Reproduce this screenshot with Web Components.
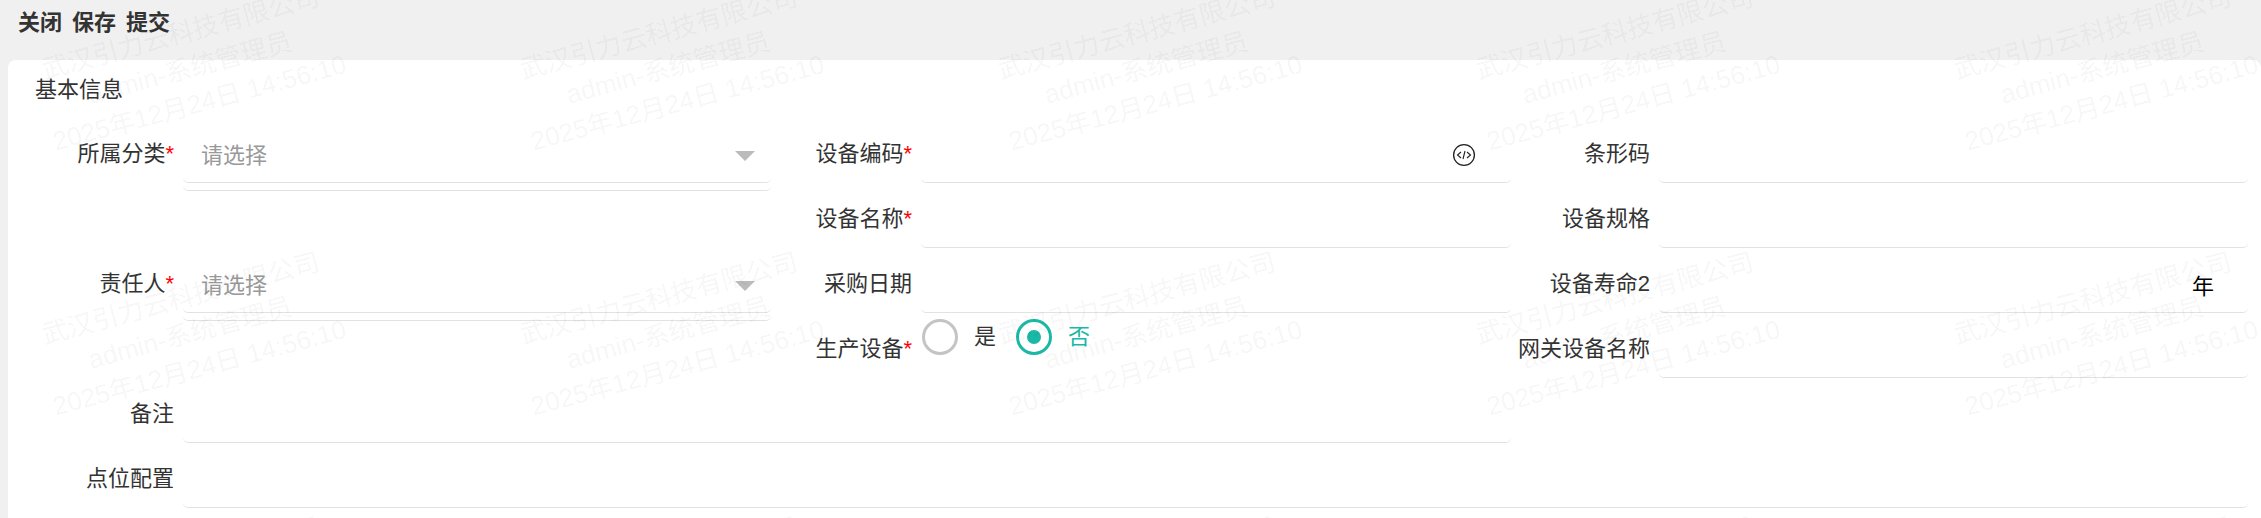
<!DOCTYPE html>
<html lang="zh-CN">
<head>
<meta charset="utf-8">
<title>设备</title>
<style>
	html, body {
		margin: 0;
		height: 518px;
		overflow: hidden;
		background: #f0f0f0;
		color: #333;
		font: 22px/30px "Liberation Sans", "Noto Sans CJK SC", sans-serif;
	}
</style>
</head>
<body>
<app-toolbar>
	<span>关闭</span>
	<span>保存</span>
	<span>提交</span>
</app-toolbar>

<form-card heading="基本信息">
	<form-field label="所属分类" required style="grid-area: 1 / 1"><select-box></select-box></form-field>
	<form-field label="设备编码" required style="grid-area: 1 / 2"><code-icon slot="end"></code-icon></form-field>
	<form-field label="条形码" narrow style="grid-area: 1 / 3"></form-field>

	<form-field label="设备名称" required style="grid-area: 2 / 2"></form-field>
	<form-field label="设备规格" narrow style="grid-area: 2 / 3"></form-field>

	<form-field label="责任人" required style="grid-area: 3 / 1"><select-box></select-box></form-field>
	<form-field label="采购日期" style="grid-area: 3 / 2"></form-field>
	<form-field label="设备寿命2" narrow style="grid-area: 3 / 3"><unit-text slot="end">年</unit-text></form-field>

	<form-field label="生产设备" required plain style="grid-area: 4 / 2">
		<radio-option>是</radio-option>
		<radio-option checked>否</radio-option>
	</form-field>
	<form-field label="网关设备名称" narrow style="grid-area: 4 / 3"></form-field>

	<form-field label="备注" style="grid-area: 5 / 1 / 6 / 3"></form-field>
	<form-field label="点位配置" style="grid-area: 6 / 1 / 7 / 4"></form-field>
</form-card>

<water-mark></water-mark>

<script>
	/**
	 * Top strip with the page actions.
	 */
	class AppToolbar extends HTMLElement {
		constructor () {
			super();
			this.attachShadow({mode: "open"}).innerHTML = `
				<style>
					:host {
						display: flex;
						gap: 10px;
						box-sizing: border-box;
						height: 60px;
						padding: 8px 0 0 18px;
						font-weight: bold;
					}
				</style>
				<slot></slot>
			`;
		}
	}

	/**
	 * The white card that holds the form grid.
	 */
	class FormCard extends HTMLElement {
		constructor () {
			super();
			this.attachShadow({mode: "open"}).innerHTML = `
				<style>
					:host {
						display: block;
						box-sizing: border-box;
						height: 458px;
						margin-left: 8px;
						padding: 15px 0 0 25px;
						background: #fff;
						border-radius: 8px 8px 0 0;
					}
					h2 {
						margin: 0 0 13px 2px;
						font: inherit;
					}
					.grid {
						display: grid;
						grid-template-columns: 738px 740px 737px;
						grid-auto-rows: 65px;
					}
				</style>
				<h2></h2>
				<div class="grid"><slot></slot></div>
			`;
			this.shadowRoot.querySelector("h2").textContent = this.getAttribute("heading");
		}
	}

	/**
	 * A label on the left and an underlined control on the right.
	 */
	class FormField extends HTMLElement {
		constructor () {
			super();
			this.attachShadow({mode: "open"}).innerHTML = `
				<style>
					:host {
						display: flex;
						height: 65px;
						--label-width: 150px;
					}
					:host([narrow]) {
						--label-width: 148px;
					}
					.label {
						flex: none;
						box-sizing: border-box;
						width: var(--label-width);
						padding: 21px 9px 0 0;
						text-align: right;
						white-space: nowrap;
					}
					.label b {
						color: #f00;
						font-weight: normal;
					}
					.control {
						flex: 1;
						display: flex;
						align-items: center;
						min-width: 0;
						box-sizing: border-box;
						border-bottom: 1px solid #e2e2e2;
						border-radius: 0 0 5px 5px;
					}
					:host([plain]) .control {
						border: 0;
						padding-top: 6px;
						align-items: flex-start;
					}
					.end {
						margin-left: auto;
						display: flex;
					}
				</style>
				<div class="label"></div>
				<div class="control">
					<slot></slot>
					<div class="end"><slot name="end"></slot></div>
				</div>
			`;
			const label = this.shadowRoot.querySelector(".label");
			label.textContent = this.getAttribute("label");
			if (this.hasAttribute("required")) {
				const star = document.createElement("b");
				star.textContent = "*";
				label.appendChild(star);
			}
		}
	}

	/**
	 * Placeholder select with its grey caret. It hangs 8px below the grid row.
	 */
	class SelectBox extends HTMLElement {
		constructor () {
			super();
			this.attachShadow({mode: "open"}).innerHTML = `
				<style>
					:host {
						flex: 1;
						align-self: flex-start;
						display: flex;
						align-items: center;
						box-sizing: border-box;
						height: 73px;
						padding: 23px 16px 20px 18px;
						margin-bottom: -8px;
						border-bottom: 1px solid #e2e2e2;
						border-radius: 0 0 5px 5px;
						color: #999;
					}
					svg {
						margin-left: auto;
					}
				</style>
				<span>请选择</span>
				<svg width="20" height="10" viewBox="0 0 20 10"><path d="M0 0h20L10 10z" fill="#bbb"/></svg>
			`;
		}
	}

	/**
	 * The round code icon at the end of the code field.
	 */
	class CodeIcon extends HTMLElement {
		constructor () {
			super();
			this.attachShadow({mode: "open"}).innerHTML = `
				<style>
					:host {
						display: block;
						margin: 0 35px 0 0;
						height: 24px;
						position: relative;
						top: 5px;
					}
				</style>
				<svg width="24" height="24" viewBox="0 0 24 24" fill="none" stroke="#222">
					<circle cx="12" cy="12" r="10.4" stroke-width="1.3"/>
					<path d="M9 9l-3.5 3L9 15M15 9l3.500 3L15 15M13 8l-2 8" stroke-width="1.1"/>
				</svg>
			`;
		}
	}

	/**
	 * Unit text on the right of a field.
	 */
	class UnitText extends HTMLElement {
		constructor () {
			super();
			this.attachShadow({mode: "open"}).innerHTML = `
				<style>
					:host {
						display: block;
						margin: 13px 34px 0 0;
						color: #000;
					}
				</style>
				<slot></slot>
			`;
		}
	}

	/**
	 * A radio circle followed by its text.
	 */
	class RadioOption extends HTMLElement {
		constructor () {
			super();
			this.attachShadow({mode: "open"}).innerHTML = `
				<style>
					:host {
						display: inline-flex;
						align-items: center;
						gap: 16px;
						margin: 0 19px 0 1px;
					}
					:host([checked]) {
						color: #1ab8a6;
					}
					i {
						display: flex;
						align-items: center;
						justify-content: center;
						box-sizing: border-box;
						width: 36px;
						height: 36px;
						border: 3px solid #c4c4c4;
						border-radius: 50%;
					}
					:host([checked]) i {
						border-color: #1ab8a6;
					}
					:host([checked]) i::after {
						content: "";
						width: 14px;
						height: 14px;
						border-radius: 50%;
						background: #1ab8a6;
					}
				</style>
				<i></i><slot></slot>
			`;
		}
	}

	// Spacing of the watermark tiles
	const TILE_COLUMNS = 6;
	const TILE_ROWS = 4;

	/**
	 * Rotated watermark repeated over the whole page.
	 */
	class WaterMark extends HTMLElement {
		constructor () {
			super();
			const tile = `
				<div class="tile"><div class="text">
					<div>武汉引力云科技有限公司</div>
					<div>admin-系统管理员</div>
					<div>2025年12月24日 14:56:10</div>
				</div></div>
			`;
			this.attachShadow({mode: "open"}).innerHTML = `
				<style>
					:host {
						position: absolute;
						inset: 0;
						overflow: hidden;
						pointer-events: none;
					}
					.sheet {
						display: grid;
						grid-template-columns: repeat(${TILE_COLUMNS}, 478px);
						grid-auto-rows: 265px;
						margin: -65px 0 0 -49px;
					}
					.tile {
						display: flex;
						align-items: center;
						justify-content: center;
						min-width: 0;
					}
					.text {
						flex: none;
						transform: rotate(-15deg);
						text-align: center;
						white-space: nowrap;
						font-size: 26px;
						line-height: 36px;
						color: rgba(0, 0, 0, 0.05);
					}
				</style>
				<div class="sheet">${tile.repeat(TILE_COLUMNS * TILE_ROWS)}</div>
			`;
		}
	}

	customElements.define("app-toolbar", AppToolbar);
	customElements.define("form-card", FormCard);
	customElements.define("form-field", FormField);
	customElements.define("select-box", SelectBox);
	customElements.define("code-icon", CodeIcon);
	customElements.define("unit-text", UnitText);
	customElements.define("radio-option", RadioOption);
	customElements.define("water-mark", WaterMark);
</script>
</body>
</html>
